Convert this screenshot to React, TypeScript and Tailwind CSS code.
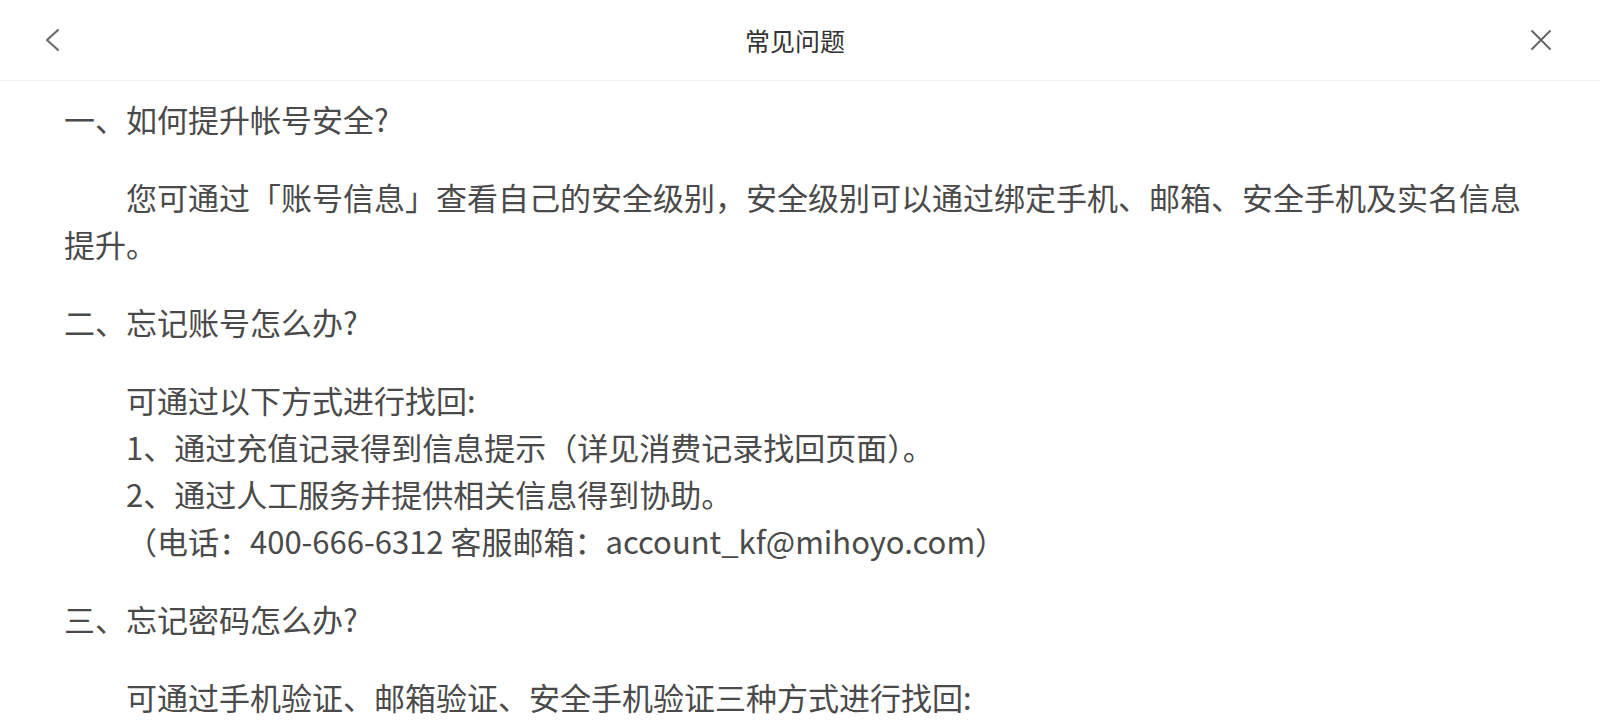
export default function App() {
  return (
    <div
      className="min-h-screen bg-white text-[#4a4a4a]"
      style={{ fontFamily: '"Noto Sans CJK SC", "Noto Sans", sans-serif' }}
    >
      <header className="flex h-[81px] items-center justify-between border-b border-[#f2f2f2] pl-[40px] pr-[44px]">
        <button className="flex h-[30px] w-[24px] items-center justify-center text-[#666]">
          <svg width="16" height="24" viewBox="0 0 16 24" fill="none">
            <path d="M14 2 L3 12 L14 22" stroke="currentColor" strokeWidth="2" strokeLinecap="round" strokeLinejoin="round" />
          </svg>
        </button>
        <h1 className="text-[25px] leading-none text-[#333]">常见问题</h1>
        <button className="flex h-[30px] w-[30px] items-center justify-center text-[#666]">
          <svg width="22" height="22" viewBox="0 0 22 22" fill="none">
            <path d="M2 2 L20 20 M20 2 L2 20" stroke="currentColor" strokeWidth="2" strokeLinecap="round" />
          </svg>
        </button>
      </header>

      <main className="flex flex-col gap-[31px] px-[64px] pt-[14px] text-[31px] leading-[47px]">
        <h2 className="font-normal">一、如何提升帐号安全?</h2>
        <p className="indent-[62px]">
          您可通过「账号信息」查看自己的安全级别，安全级别可以通过绑定手机、邮箱、安全手机及实名信息提升。
        </p>

        <h2 className="font-normal">二、忘记账号怎么办?</h2>
        <div className="pl-[62px]">
          <p>可通过以下方式进行找回:</p>
          <p>1、通过充值记录得到信息提示（详见消费记录找回页面）。</p>
          <p>2、通过人工服务并提供相关信息得到协助。</p>
          <p>（电话：400-666-6312 客服邮箱：account_kf@mihoyo.com）</p>
        </div>

        <h2 className="font-normal">三、忘记密码怎么办?</h2>
        <p className="indent-[62px]">可通过手机验证、邮箱验证、安全手机验证三种方式进行找回:</p>
      </main>
    </div>
  );
}
